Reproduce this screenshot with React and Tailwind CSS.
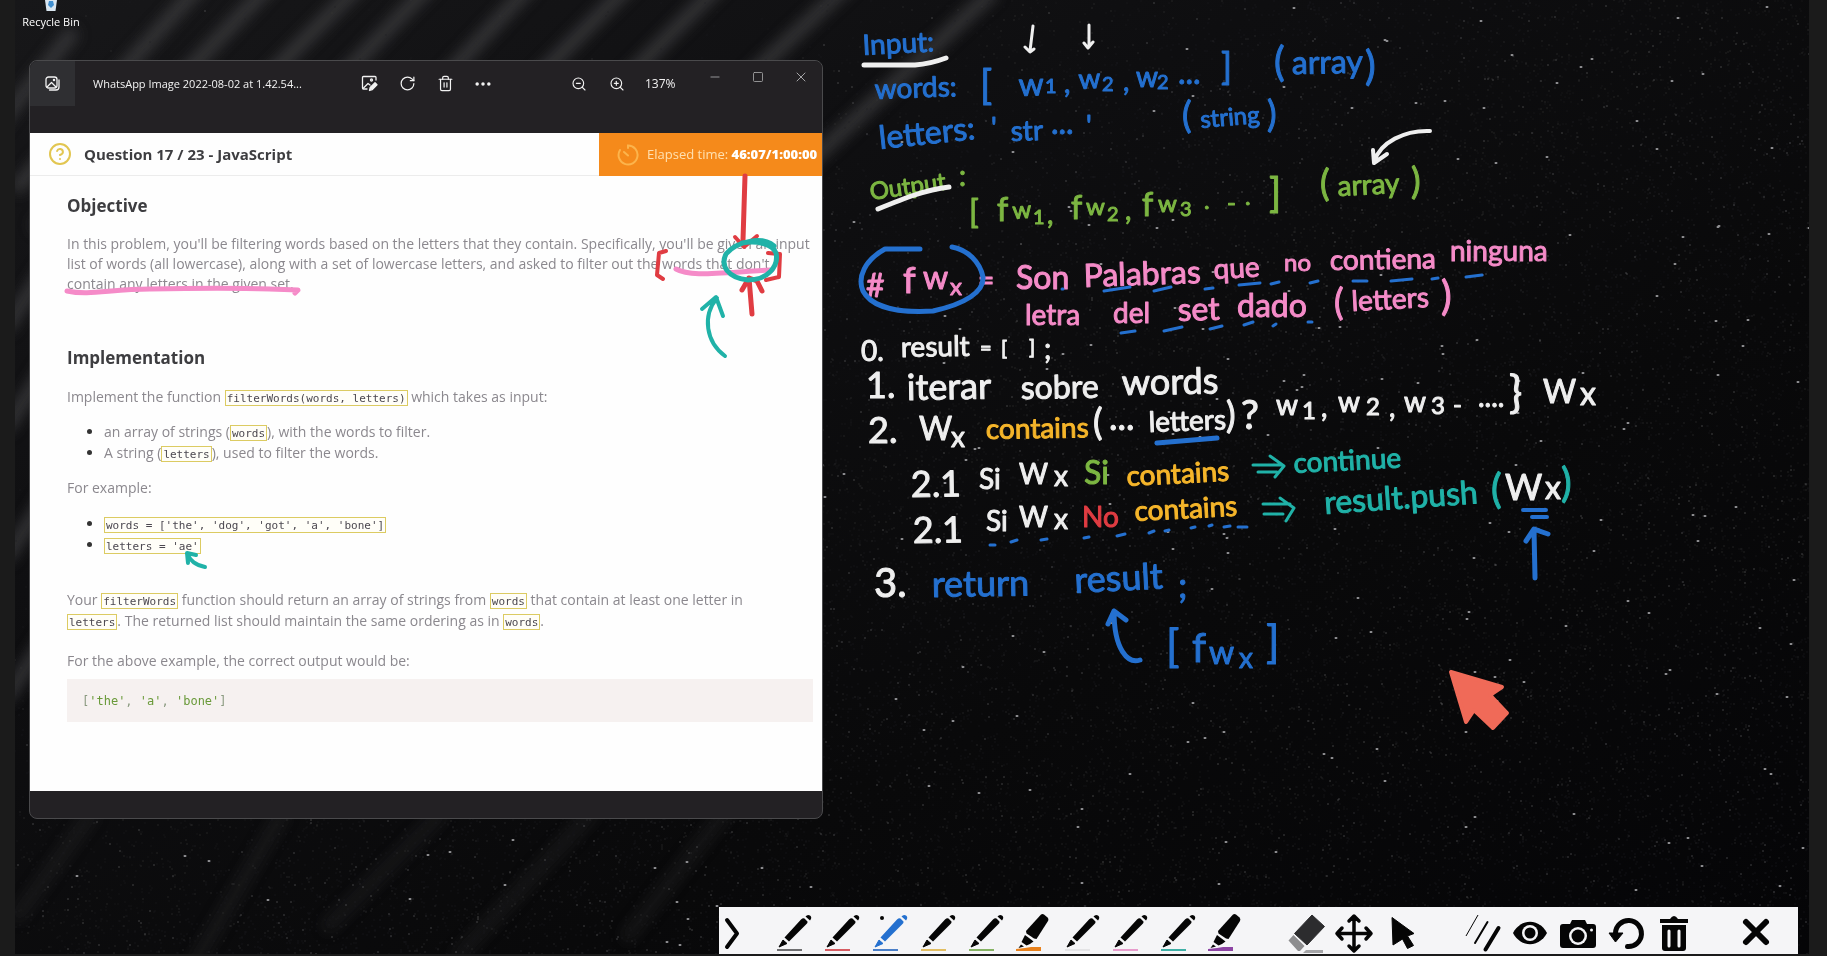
import React from "react";
import { CircleHelp, Ellipsis, Minus, RotateCw, Square, Trash2, X, ZoomIn, ZoomOut } from "lucide-react";

const BLUE = "#2470cf";
const GREEN = "#7cb642";
const PINK = "#f58bc8";
const TEAL = "#20b2a8";
const AMBER = "#f5b52a";
const RED = "#e03c42";
const WHITE = "#efefef";

/* ---------- wallpaper ---------- */

function seeded(seed) {
  let s = seed;
  return () => {
    s = (s * 16807) % 2147483647;
    return s / 2147483647;
  };
}

function stars(seed, count) {
  const rnd = seeded(seed);
  let d = "";
  for (let i = 0; i < count; i++) {
    const x = Math.round(rnd() * 1800);
    const y = Math.round(rnd() * 956);
    const keep = rnd();
    const density = Math.min(1, Math.max(0.03, (x * 0.8 + y * 1.2 - 600) / 700));
    if (keep < density) d += `M${x} ${y}h1`;
  }
  return d;
}

const DUST = stars(11, 30000);
const FAINT = stars(23, 9000);
const MEDIUM = stars(37, 2200);
const BRIGHT = stars(71, 330);

const STREAKS = [
  [-20, 130, 60, 30], [0, 190, 190, -20], [20, 230, 270, -30], [30, 300, 370, -40], [120, 290, 450, -50],
  [260, 260, 540, -40], [360, 240, 640, -40], [450, 240, 740, -50], [560, 240, 860, -40], [700, 250, 980, -10],
  [-10, 330, 50, 240], [-10, 430, 50, 340], [-10, 560, 50, 470], [-10, 700, 50, 610],
];

function Wallpaper() {
  return (
    <svg className="pointer-events-none absolute inset-0 h-full w-full" viewBox="0 0 1795 954" preserveAspectRatio="xMidYMid slice" aria-hidden="true">
      <defs>
        <linearGradient id="sky" x1="0" y1="0" x2="1" y2="1">
          <stop offset="0" stopColor="#171719" />
          <stop offset="0.35" stopColor="#0e0e10" />
          <stop offset="0.65" stopColor="#09090a" />
          <stop offset="1" stopColor="#050507" />
        </linearGradient>
        <filter id="soft" x="-20%" y="-20%" width="140%" height="140%">
          <feGaussianBlur stdDeviation="7" />
        </filter>
      </defs>
      <rect width="1795" height="954" fill="url(#sky)" />
      <g filter="url(#soft)" stroke="#444446" strokeWidth="14" opacity="0.7">
        {STREAKS.map(([a, b, c, d], i) => (
          <line key={i} x1={a} y1={b} x2={c} y2={d} />
        ))}
        <path d="M0 920L80 810M170 980L270 810M310 930L430 810M440 960L580 810M610 940L720 800" opacity="0.35" />
      </g>
      <path d={DUST} stroke="#1f1f21" strokeWidth="1" />
      <path d={FAINT} stroke="#39393b" strokeWidth="1" />
      <path d={MEDIUM} stroke="#77777a" strokeWidth="1" />
      <path d={BRIGHT} stroke="#8f8f92" strokeWidth="2" strokeLinecap="round" />
    </svg>
  );
}

/* ---------- photo window ---------- */

function IconButton({ label, children }) {
  return (
    <button type="button" aria-label={label} className="flex h-[45px] w-[38px] items-center justify-center text-[#f2f2f2]">
      {children}
    </button>
  );
}

function GalleryIcon() {
  return (
    <svg width="15" height="15" viewBox="0 0 15 15" fill="none" stroke="currentColor" strokeWidth="1.3" strokeLinecap="round" strokeLinejoin="round">
      <rect x="1" y="1" width="11" height="11" rx="2.500" />
      <path d="M14 4V11A3 3 0 0 1 11 14H4.500" />
      <path d="M2 11L6.500 6.500 11 11" />
      <circle cx="9" cy="4" r="0.600" fill="currentColor" />
    </svg>
  );
}

function EditImageIcon() {
  return (
    <svg width="17" height="17" viewBox="0 0 17 17" fill="none" stroke="currentColor" strokeWidth="1.3" strokeLinejoin="round" strokeLinecap="round">
      <path d="M15 5V2.500A1 1 0 0 0 14 1.500H2.500A1 1 0 0 0 1.500 2.500V13a1 1 0 0 0 1 1H6" />
      <path d="M2 13.500L7 8.500 9 10" />
      <circle cx="10.500" cy="5" r="1" />
      <path d="M8.500 15.500L9.200 12.500 14 7.800 16 9.800 11.300 14.600Z" fill="currentColor" />
    </svg>
  );
}

function TitleBar() {
  return (
    <header className="flex h-[72px] items-start rounded-t-lg bg-[#232124] text-[#f2f2f2]">
      <div className="flex h-[45px] w-[45px] items-center justify-center rounded-tl-lg bg-[#2f2f32]">
        <GalleryIcon />
      </div>
      <h1 className="ml-[18px] w-[257px] truncate text-[11px] leading-[45px]">WhatsApp Image 2022-08-02 at 1.42.54...</h1>
      <div className="flex">
        <IconButton label="Edit image"><EditImageIcon /></IconButton>
        <IconButton label="Rotate"><RotateCw size={17} strokeWidth={1.700} /></IconButton>
        <IconButton label="Delete"><Trash2 size={17} strokeWidth={1.700} /></IconButton>
        <IconButton label="See more"><Ellipsis size={20} strokeWidth={2.200} /></IconButton>
      </div>
      <div className="ml-[58px] flex items-center">
        <IconButton label="Zoom out"><ZoomOut size={16} strokeWidth={1.700} /></IconButton>
        <IconButton label="Zoom in"><ZoomIn size={16} strokeWidth={1.700} /></IconButton>
        <span className="ml-[9px] text-[12px] leading-[44px]">137%</span>
      </div>
      <div className="ml-auto flex text-[#a5a5a7]">
        <button type="button" aria-label="Minimize" className="flex h-[31px] w-[43px] items-center justify-center"><Minus size={14} strokeWidth={1.500} /></button>
        <button type="button" aria-label="Maximize" className="flex h-[31px] w-[43px] items-center justify-center"><Square size={12} strokeWidth={1.700} /></button>
        <button type="button" aria-label="Close" className="flex h-[31px] w-[43px] items-center justify-center"><X size={16} strokeWidth={1.500} /></button>
      </div>
    </header>
  );
}

function Code({ children }) {
  return (
    <code className="border border-[#dccb62] bg-[#fffef8] px-px pt-px font-['DejaVu_Sans_Mono',monospace] text-[11px] leading-[15px] font-normal text-[#4c4850]">
      {children}
    </code>
  );
}

function Question() {
  return (
    <article className="h-[658px] bg-[#fefefe] text-[#8b888e]">
      <header className="flex h-[43px] items-stretch border-b border-[#ececec]">
        <div className="flex grow items-center gap-3 pl-[18px]">
          <CircleHelp size={24} strokeWidth={2} className="text-[#e2c651]" />
          <h2 className="text-[15px] font-bold text-[#3d3d40]">Question 17 / 23 - JavaScript</h2>
        </div>
        <div className="-mb-px flex w-[223px] items-center gap-2 bg-[#f58a1b] pl-[18px] text-[13px] whitespace-nowrap">
          <svg width="22" height="24" viewBox="0 0 22 24" fill="none" stroke="#fcb44c" strokeWidth="2" strokeLinecap="round">
            <path d="M11 5V2.500a9.500 9.500 0 1 1-8 4.500M7 9l4 3.500" />
          </svg>
          <span className="text-[#ffe0b0]">Elapsed time: <b className="font-extrabold text-white">46:07/1:00:00</b></span>
        </div>
      </header>
      <div className="pr-[9px] pl-[37px] text-[14px] leading-[20px] whitespace-nowrap">
        <h3 className="mt-[18px] text-[17px] leading-[24px] font-bold text-[#3d3d40]">Objective</h3>
        <p className="mt-[16px]">
          In this problem, you'll be filtering words based on the letters that they contain. Specifically, you'll be given an input<br />
          list of words (all lowercase), along with a set of lowercase letters, and asked to filter out the words that don't<br />
          contain any letters in the given set.
        </p>
        <h3 className="mt-[52px] text-[17px] leading-[24px] font-bold text-[#3d3d40]">Implementation</h3>
        <p className="mt-[17px]">Implement the function <Code>filterWords(words, letters)</Code> which takes as input:</p>
        <ul className="mt-[14px] list-disc pl-[37px] leading-[21px] marker:text-[#333]">
          <li>an array of strings (<Code>words</Code>), with the words to filter.</li>
          <li>A string (<Code>letters</Code>), used to filter the words.</li>
        </ul>
        <p className="mt-[15px]">For example:</p>
        <ul className="mt-[15px] list-disc pl-[37px] leading-[21px] marker:text-[#333]">
          <li><Code>words = ['the', 'dog', 'got', 'a', 'bone']</Code></li>
          <li><Code>letters = 'ae'</Code></li>
        </ul>
        <p className="mt-[34px] leading-[21px]">
          Your <Code>filterWords</Code> function should return an array of strings from <Code>words</Code> that contain at least one letter in<br />
          <Code>letters</Code>. The returned list should maintain the same ordering as in <Code>words</Code>.
        </p>
        <p className="mt-[20px]">For the above example, the correct output would be:</p>
        <pre className="mt-[8px] h-[43px] bg-[#f6f1f0] pl-[15px] font-['DejaVu_Sans_Mono',monospace] text-[12px] leading-[45px] text-[#8a9a80]">
          [<span className="text-[#6a9a3a]">'the'</span>, <span className="text-[#6a9a3a]">'a'</span>, <span className="text-[#6a9a3a]">'bone'</span>]
        </pre>
      </div>
    </article>
  );
}

function PhotoWindow() {
  return (
    <section className="absolute top-[60px] left-[14px] w-[794px] rounded-lg border border-[#4a4a4c] bg-[#232124] font-['Open_Sans','Noto_Sans',sans-serif]">
      <TitleBar />
      <Question />
      <div className="h-[27px]" />
    </section>
  );
}

/* ---------- ink layer ---------- */

function Note({ x, y, size, tilt = 0, children }) {
  return (
    <text x={x} y={y} fontSize={size} transform={`rotate(${tilt} ${x} ${y})`}>
      {children}
    </text>
  );
}

function Ink({ color, children }) {
  return (
    <g fill={color} stroke={color} strokeWidth="1" strokeLinejoin="round">
      {children}
    </g>
  );
}

function Stroke({ color, d, width = 4 }) {
  return <path d={d} fill="none" stroke={color} strokeWidth={width} strokeLinecap="round" strokeLinejoin="round" />;
}

function InkLayer() {
  return (
    <svg className="pointer-events-none absolute top-0 -left-[15px] font-['Lato',sans-serif]" width="1827" height="956" viewBox="0 0 1827 956">
      <Ink color={BLUE}>
        <Note x={863} y={55} size={28} tilt={-3}>Input:</Note>
        <Note x={875} y={99} size={28} tilt={-2}>words:</Note>
        <Note x={980} y={99} size={40}>[</Note>
        <Note x={1019} y={96} size={32} tilt={-2}>w</Note>
        <Note x={1045} y={93} size={20}>1</Note>
        <Note x={1064} y={93} size={28}>,</Note>
        <Note x={1079} y={89} size={28} tilt={-3}>w</Note>
        <Note x={1102} y={91} size={20}>2</Note>
        <Note x={1123} y={91} size={28}>,</Note>
        <Note x={1136} y={87} size={28}>w</Note>
        <Note x={1157} y={89} size={20}>2</Note>
        <Note x={1178} y={84} size={32}>...</Note>
        <Note x={1221} y={80} size={36}>]</Note>
        <Note x={1274} y={76} size={40}>(</Note>
        <Note x={1292} y={74} size={32} tilt={-1}>array</Note>
        <Note x={1365} y={80} size={40}>)</Note>
        <Note x={880} y={149} size={32} tilt={-6}>letters:</Note>
        <Note x={991} y={138} size={28}>'</Note>
        <Note x={1011} y={141} size={28} tilt={-2}>str</Note>
        <Note x={1051} y={134} size={32}>...</Note>
        <Note x={1086} y={136} size={28}>'</Note>
        <Note x={1182} y={128} size={36}>(</Note>
        <Note x={1201} y={128} size={24} tilt={-5}>string</Note>
        <Note x={1267} y={127} size={36}>)</Note>
      </Ink>
      <Stroke color={WHITE} width={5} d="M864 65H915C930 64 938 61 946 58" />
      <Stroke color={WHITE} width={3} d="M1033 26L1030 51M1025 47L1030 52 1034 49M1089 25V47M1084 43L1088 48 1093 42" />

      <Ink color={GREEN}>
        <Note x={871} y={200} size={24} tilt={-8}>Output</Note>
        <Note x={959} y={186} size={28}>:</Note>
        <Note x={969} y={223} size={32}>[</Note>
        <Note x={997} y={221} size={32}>f</Note>
        <Note x={1013} y={219} size={24} tilt={-4}>w</Note>
        <Note x={1033} y={224} size={20}>1</Note>
        <Note x={1047} y={224} size={28}>,</Note>
        <Note x={1071} y={219} size={32}>f</Note>
        <Note x={1086} y={215} size={24}>w</Note>
        <Note x={1107} y={221} size={20}>2</Note>
        <Note x={1125} y={220} size={28}>,</Note>
        <Note x={1142} y={216} size={32}>f</Note>
        <Note x={1158} y={212} size={24}>w</Note>
        <Note x={1180} y={216} size={20}>3</Note>
        <Note x={1204} y={209} size={24}>.</Note>
        <Note x={1227} y={211} size={24}>-</Note>
        <Note x={1245} y={205} size={24}>.</Note>
        <Note x={1269} y={207} size={40}>]</Note>
        <Note x={1320} y={196} size={36}>(</Note>
        <Note x={1338} y={196} size={28} tilt={-3}>array</Note>
        <Note x={1411} y={194} size={36}>)</Note>
      </Ink>
      <Stroke color={WHITE} width={5} d="M878 209C905 198 925 190 949 187" />
      <Stroke color={WHITE} width={4} d="M1430 131C1405 130 1380 142 1374 162M1373 150L1374 163 1387 154" />

      <Ink color={PINK}>
        <Note x={866} y={297} size={32}>#</Note>
        <Note x={903} y={293} size={36}>f</Note>
        <Note x={923} y={289} size={32}>w</Note>
        <Note x={950} y={295} size={24}>x</Note>
        <Note x={978} y={290} size={28}>=</Note>
        <Note x={1016} y={289} size={32}>Son</Note>
        <Note x={1084} y={287} size={32} tilt={-2}>Palabras</Note>
        <Note x={1214} y={279} size={28} tilt={-3}>que</Note>
        <Note x={1284} y={271} size={24}>no</Note>
        <Note x={1330} y={270} size={28} tilt={-1}>contiena</Note>
        <Note x={1450} y={261} size={28}>ninguna</Note>
        <Note x={1025} y={325} size={28}>letra</Note>
        <Note x={1113} y={323} size={28}>del</Note>
        <Note x={1178} y={321} size={32} tilt={-2}>set</Note>
        <Note x={1237} y={317} size={32}>dado</Note>
        <Note x={1334} y={315} size={36}>(</Note>
        <Note x={1352} y={311} size={28} tilt={-3}>letters</Note>
        <Note x={1441} y={310} size={40}>)</Note>
      </Ink>
      <Stroke color={BLUE} width={5} d="M920 249H885C865 260 857 277 863 291 872 308 900 313 933 311 965 304 984 292 983 277 980 262 968 250 952 247" />
      <Stroke color={BLUE} width={3} d="M1062 289h1M1104 291L1130 287M1154 291L1171 287M1205 289L1213 288M1239 285L1260 283M1271 284L1279 282M1310 283L1318 281M1353 281H1367M1391 281L1412 279M1432 279L1438 278M1466 277L1482 275M1121 333L1135 331M1164 331L1182 327M1210 329L1222 326M1244 325L1253 322M1273 326L1276 324M1308 322H1312" />

      <Ink color={WHITE}>
        <Note x={861} y={361} size={28}>0.</Note>
        <Note x={901} y={357} size={28} tilt={-1}>result</Note>
        <Note x={980} y={355} size={20}>=</Note>
        <Note x={1001} y={355} size={20}>[</Note>
        <Note x={1029} y={354} size={20}>]</Note>
        <Note x={1044} y={359} size={28}>;</Note>
        <Note x={866} y={398} size={36}>1.</Note>
        <Note x={907} y={400} size={36} tilt={-1}>iterar</Note>
        <Note x={1021} y={399} size={32} tilt={-1}>sobre</Note>
        <Note x={1122} y={395} size={36} tilt={-1}>words</Note>
        <Note x={868} y={443} size={36}>2.</Note>
        <Note x={919} y={440} size={32}>W</Note>
        <Note x={951} y={447} size={28}>x</Note>
        <Note x={1093} y={435} size={36}>(</Note>
        <Note x={1109} y={430} size={36}>...</Note>
        <Note x={1149} y={432} size={28} tilt={-2}>letters</Note>
        <Note x={1226} y={428} size={36}>)</Note>
        <Note x={1241} y={429} size={40}>?</Note>
        <Note x={1276} y={415} size={28}>w</Note>
        <Note x={1302} y={419} size={24}>1</Note>
        <Note x={1321} y={417} size={28}>,</Note>
        <Note x={1338} y={412} size={28}>w</Note>
        <Note x={1366} y={415} size={24}>2</Note>
        <Note x={1389} y={417} size={28}>,</Note>
        <Note x={1404} y={412} size={28}>w</Note>
        <Note x={1431} y={414} size={24}>3</Note>
        <Note x={1453} y={413} size={24}>-</Note>
        <Note x={1478} y={407} size={28}>....</Note>
        <Note x={1509} y={408} size={44}>{"}"}</Note>
        <Note x={1543} y={403} size={32}>W</Note>
        <Note x={1580} y={405} size={32}>x</Note>
        <Note x={911} y={497} size={36} tilt={-1}>2.1</Note>
        <Note x={979} y={489} size={28}>Si</Note>
        <Note x={1019} y={484} size={28}>W</Note>
        <Note x={1054} y={486} size={28}>x</Note>
        <Note x={913} y={543} size={36} tilt={-1}>2.1</Note>
        <Note x={986} y={531} size={28}>Si</Note>
        <Note x={1019} y={527} size={28}>W</Note>
        <Note x={1054} y={529} size={28}>x</Note>
        <Note x={874} y={597} size={40}>3.</Note>
        <Note x={1505} y={500} size={36}>W</Note>
        <Note x={1545} y={499} size={32}>x</Note>
      </Ink>
      <Ink color={AMBER}>
        <Note x={986} y={439} size={28} tilt={-1}>contains</Note>
        <Note x={1127} y={486} size={28} tilt={-3}>contains</Note>
        <Note x={1135} y={521} size={28} tilt={-3}>contains</Note>
      </Ink>
      <Ink color={GREEN}><Note x={1084} y={484} size={32}>Si</Note></Ink>
      <Ink color={RED}><Note x={1082} y={527} size={28}>No</Note></Ink>
      <Stroke color={BLUE} width={5} d="M1157 443L1217 438" />
      <Stroke color={BLUE} width={3} d="M990 545h5M1011 542L1017 540M1041 540L1047 539M1084 538L1089 537M1117 536L1125 534M1149 533L1154 531M1165 531L1169 530M1191 528L1195 527M1209 526L1212 525M1224 527L1230 526M1238 527H1247" />

      <Stroke color={TEAL} width={3} d="M1253 465H1281M1258 472H1277M1270 456L1284 466 1275 477M1263 504H1290M1264 514H1283M1280 498L1294 508 1286 521" />
      <Ink color={TEAL}>
        <Note x={1294} y={473} size={28} tilt={-3}>continue</Note>
        <Note x={1325} y={514} size={32} tilt={-4}>result.push</Note>
        <Note x={1491} y={503} size={40}>(</Note>
        <Note x={1561} y={497} size={40}>)</Note>
      </Ink>

      <Ink color={BLUE}>
        <Note x={932} y={597} size={36} tilt={-1}>return</Note>
        <Note x={1075} y={593} size={36} tilt={-3}>result</Note>
        <Note x={1178} y={598} size={36}>;</Note>
        <Note x={1166} y={662} size={44}>[</Note>
        <Note x={1192} y={662} size={40}>f</Note>
        <Note x={1209} y={664} size={32}>w</Note>
        <Note x={1239} y={668} size={28}>x</Note>
        <Note x={1266} y={658} size={44}>]</Note>
      </Ink>
      <Stroke color={BLUE} width={5} d="M1140 660C1128 664 1114 650 1114 611M1108 624L1114 611 1126 620" />
      <Stroke color={BLUE} width={4} d="M1523 510H1546M1532 517H1547" />
      <Stroke color={BLUE} width={5} d="M1535 578L1534 530M1526 541L1534 529 1548 534" />

      <Stroke color={PINK} width={5} d="M676 269C690 277 715 273 772 270" />
      <Stroke color={PINK} width={5} d="M67 291C90 296 110 289 150 289 200 288 260 288 298 290L295 293" />
      <Stroke color={RED} width={5} d="M745 176L743 240" />
      <Stroke color={RED} width={4} d="M735 237L744 247 757 236" />
      <Stroke color={RED} width={4} d="M666 251L659 253 657 275 663 279M768 253L780 254 779 277 766 280" />
      <Stroke color={RED} width={5} d="M752 314L749 278M742 290L749 278 757 281 762 291" />
      <Stroke color={TEAL} width={5} d="M774 246C762 236 737 241 726 254 720 266 728 278 748 280 768 280 779 266 776 253 773 244 757 240 742 243" />
      <Stroke color={TEAL} width={4} d="M725 356C706 342 702 316 717 298M702 309L716 297 723 316" />
      <Stroke color={TEAL} width={4} d="M205 567C195 565 191 561 187 554M188 563L187 553 196 555" />

      <path d="M1451 672L1502 687 1490 695 1507 713 1493 728 1474 710 1466 722Z" fill="#f06a58" stroke="#f06a58" strokeWidth="4" strokeLinejoin="round" />
    </svg>
  );
}

/* ---------- drawing toolbar ---------- */

function Tool({ label, children }) {
  return (
    <button type="button" aria-label={label} className="h-[47px] w-12 shrink-0">
      <svg width="48" height="47" viewBox="0 0 48 47" fill="none" stroke="none">{children}</svg>
    </button>
  );
}

function Pen({ label, color, active }) {
  const body = active ? "#2470cf" : "#050505";
  return (
    <Tool label={label}>
      <path d="M10 40L14 33 18 36.500Z" fill={body} stroke={body} strokeWidth="1" strokeLinejoin="round" />
      <path d="M15.500 30.500L32 12.500Q34 10.500 35.500 11.500L38.500 14.500Q39 16 37 17.500L20 34.500Z" fill={body} />
      <path d="M36.500 9.500Q38.500 7 41 8.500 43.500 10.500 41 13.500Z" fill={body} />
      {active && <circle cx="17" cy="11" r="2" fill="#050505" />}
      <rect x="8" y="42" width="25" height="2" fill={color} />
    </Tool>
  );
}

function Marker({ label, color }) {
  return (
    <Tool label={label}>
      <path d="M32 7.500Q33.500 6.500 35 7.500L38.500 10.500Q40 12 39 14L27.500 32 25 31.500 17.500 26.500 17 24Z" fill="#050505" />
      <path d="M16 28L24.500 34.500 21 37 17.500 38.500 12.500 35Z" fill="#050505" />
      <path d="M12 37.500L15 39.500 9.500 41Z" fill="#050505" />
      <path d="M7 42L16 41 22 40H32V44H7Z" fill={color} />
    </Tool>
  );
}

function Toolbar() {
  return (
    <nav aria-label="Drawing tools" className="relative z-10 mr-[11px] flex h-[47px] items-center self-end bg-[#f5f5f7] pr-[18px]">
      <button type="button" aria-label="Collapse" className="mr-[25px] h-[47px] w-[25px]">
        <svg width="25" height="47" viewBox="0 0 25 47" fill="none"><path d="M8 13L18 26.500 8 40" stroke="#050505" strokeWidth="4" strokeLinecap="round" strokeLinejoin="round" /></svg>
      </button>
      <Pen label="Black pen" color="#6e6e70" />
      <Pen label="Red pen" color="#d65c62" />
      <Pen label="Blue pen" color="#4a7fc8" active />
      <Pen label="Yellow pen" color="#e2be62" />
      <Pen label="Green pen" color="#86b364" />
      <Marker label="Orange marker" color="#e8811c" />
      <Pen label="White pen" color="#e4e4e6" />
      <Pen label="Pink pen" color="#e79ccc" />
      <Pen label="Teal pen" color="#3fb0a6" />
      <Marker label="Purple marker" color="#8d44a4" />
      <div className="flex pl-[33px]">
        <Tool label="Eraser">
          <path d="M30 8L42.500 19.500 25 38 12.500 26.500Z" fill="#2c2c2e" stroke="#2c2c2e" strokeWidth="1" strokeLinejoin="round" />
          <path d="M11.500 28L22.500 39 18 44H16L6.500 33.500Z" fill="#8d8d8f" />
          <path d="M24 43H41V46H21Z" fill="#a5a5a7" />
        </Tool>
        <Tool label="Move">
          <path d="M24 11V42M8 26.500H40M19 14L24 9 29 14M19 39L24 44 29 39M12 21L7 26.500 12 32M36 21L41 26.500 36 32" stroke="#050505" strokeWidth="3.500" strokeLinecap="round" strokeLinejoin="round" />
        </Tool>
        <Tool label="Pointer">
          <path d="M14 10.500L36 26.500 29.500 29 35.500 38.500 29.500 41.500 24.500 32 15 38Z" fill="#050505" stroke="#050505" strokeWidth="1" strokeLinejoin="round" />
        </Tool>
      </div>
      <div className="flex pl-8">
        <Tool label="Line width">
          <path d="M8 29L20 8" stroke="#050505" strokeWidth="1" />
          <path d="M17 36L29.500 15" stroke="#050505" strokeWidth="2" strokeLinecap="round" />
          <path d="M27.500 42.500L40.500 21" stroke="#050505" strokeWidth="4" strokeLinecap="round" />
        </Tool>
        <Tool label="Show or hide">
          <path d="M7 26C15 11 33 11 41 26 33 41 15 41 7 26Z" fill="#050505" />
          <circle cx="24" cy="26" r="8" fill="#f5f5f7" />
          <circle cx="24" cy="26" r="5.500" fill="#050505" />
        </Tool>
        <Tool label="Screenshot">
          <path d="M18 13H31L33 17H39Q42 17 42 20V38Q42 41 39 41H9Q6 41 6 38V20Q6 17 9 17H16Z" fill="#050505" />
          <circle cx="24" cy="29" r="9" fill="#f5f5f7" />
          <circle cx="24" cy="29" r="6.500" fill="#050505" />
          <circle cx="37.500" cy="23" r="1.500" fill="#f5f5f7" />
        </Tool>
        <Tool label="Undo">
          <path d="M13.500 26A13 13 0 1 1 25.500 39.500" stroke="#050505" strokeWidth="5" strokeLinecap="round" />
          <path d="M7 26H21L13.500 35Z" fill="#050505" stroke="#050505" strokeWidth="1" strokeLinejoin="round" />
        </Tool>
        <Tool label="Delete all">
          <path d="M10 12H20Q24 6 28 12H38V16H10Z" fill="#050505" />
          <path d="M12 18H36V41Q36 44 33 44H15Q12 44 12 41Z" fill="#050505" />
          <path d="M19 24V39M29 24V39" stroke="#f5f5f7" strokeWidth="3" strokeLinecap="round" />
        </Tool>
      </div>
      <div className="pl-[34px]">
        <Tool label="Close">
          <path d="M14 18L34 38M34 18L14 38" stroke="#050505" strokeWidth="6" strokeLinecap="round" />
        </Tool>
      </div>
    </nav>
  );
}

export default function App() {
  return (
    <div className="flex min-h-screen bg-[#1b1b1b] pr-[18px] pb-[2px] pl-[15px]">
      <main className="relative flex grow flex-col justify-between overflow-hidden">
        <Wallpaper />
        <button type="button" className="relative flex w-[72px] flex-col items-center font-['Open_Sans',sans-serif] text-[11px] leading-[22px] text-white">
          <svg width="14" height="11" viewBox="0 0 14 11" aria-hidden="true">
            <path d="M1 0H13L11.500 11H2.500Z" fill="#d9e6f0" />
            <path d="M5 1L9 1 10 5 7 8 4 5Z" fill="#3f8fd0" />
          </svg>
          Recycle Bin
        </button>
        <PhotoWindow />
        <InkLayer />
        <Toolbar />
      </main>
    </div>
  );
}
